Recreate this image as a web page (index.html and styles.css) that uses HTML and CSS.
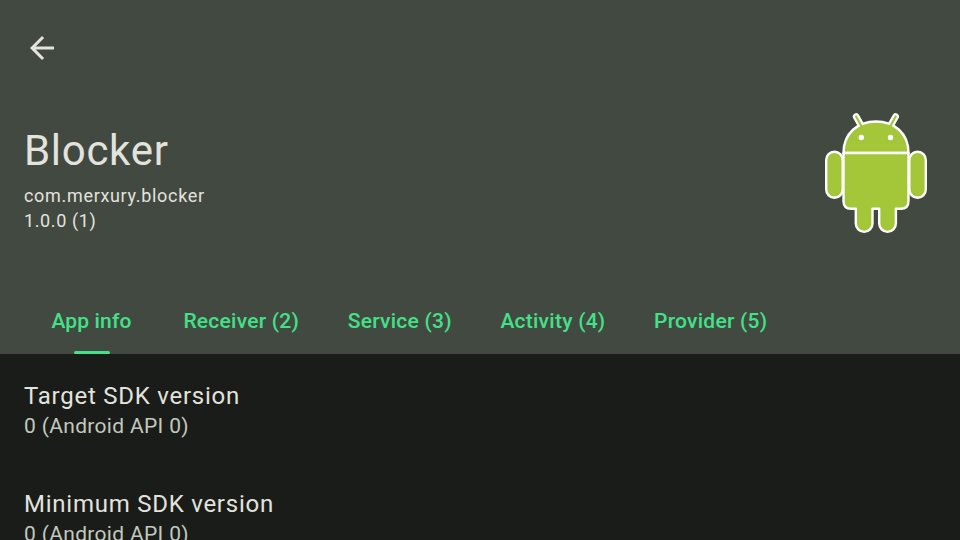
FILE: index.html
```html
<!DOCTYPE html>
<html lang="en">
<head>
<meta charset="utf-8">
<title>Blocker</title>
<link rel="stylesheet" href="styles.css">
</head>
<body>
<div class="screen">
  <header class="header">
    <nav class="toolbar">
      <svg class="back" viewBox="0 0 24 24"><path d="M20 11H7.830l5.590-5.590L12 4l-8 8 8 8 1.410-1.410L7.830 13H20v-2z"/></svg>
    </nav>
    <div class="summary">
      <div class="identity">
        <h1 class="name">Blocker</h1>
        <p class="meta package">com.merxury.blocker</p>
        <p class="meta version">1.0.0 (1)</p>
      </div>
      <svg class="logo" viewBox="0 0 104 122">
        <path d="M32.100 4.500L37.500 14M71.700 4.500L66.300 14" class="antenna-edge"/>
        <g class="outlined">
          <path d="M19.500 41C19.500 21 34 9.500 52 9.500S84.500 21 84.500 41Z"/>
          <path d="M19.500 41H84.500V88.900Q84.500 96.700 76.700 96.700H71.900V111.500A8.350 8.350 0 0 1 55.200 111.500V96.700H48.500V111.500A8.350 8.350 0 0 1 31.800 111.500V96.700H27.200Q19.500 96.700 19.500 88.900Z"/>
          <rect x="2.200" y="39.700" width="16.500" height="46" rx="8.200"/>
          <rect x="85.300" y="39.700" width="16.500" height="46" rx="8.200"/>
        </g>
        <path class="antenna" d="M32.100 4.500L38 15M71.700 4.500L65.800 15"/>
        <circle class="eye" cx="37.300" cy="25.500" r="2.700"/>
        <circle class="eye" cx="66.500" cy="25.500" r="2.700"/>
      </svg>
    </div>
    <nav class="tabs">
      <span class="tab active">App info</span>
      <span class="tab">Receiver (2)</span>
      <span class="tab">Service (3)</span>
      <span class="tab">Activity (4)</span>
      <span class="tab">Provider (5)</span>
    </nav>
  </header>
  <main class="list">
    <section class="item"><h2 class="title">Target SDK version</h2><p class="value">0 (Android API 0)</p></section>
    <section class="item"><h2 class="title">Minimum SDK version</h2><p class="value">0 (Android API 0)</p></section>
  </main>
</div>
</body>
</html>
```
FILE: styles.css
```css
* { box-sizing: border-box; margin: 0; padding: 0; }
body { font-family: Roboto, sans-serif; font-weight: 400; background: #1a1c19; color: #e2e3dd; }
.screen { width: 960px; height: 540px; overflow: hidden; }
.header { height: 354px; background: #424940; display: flex; flex-direction: column; }
.toolbar { height: 96px; padding: 30px 24px; }
.back { display: block; width: 36px; height: 36px; fill: #e2e3dd; }
.summary { height: 192px; padding: 16px 32px 0 24px; display: flex; justify-content: space-between; }
.identity { padding-top: 12px; }
.name { font-size: 42px; line-height: 54px; font-weight: 400; letter-spacing: 0.7px; }
.meta { font-size: 18px; line-height: 24px; letter-spacing: 0.68px; }
.package { margin-top: 6px; }
.version { line-height: 25px; letter-spacing: 0.62px; }
.logo { width: 104px; height: 122px; overflow: visible; }
.outlined { fill: #a4c639; stroke: #fff; stroke-width: 2.400; stroke-linejoin: round; }
.antenna-edge { stroke: #fff; stroke-width: 6.600; stroke-linecap: round; }
.antenna { stroke: #a4c639; stroke-width: 2.200; stroke-linecap: round; }
.eye { fill: #fff; }
.tabs { height: 66px; padding-left: 24px; display: flex; }
.tab { position: relative; min-width: 135px; padding: 0 24.2px; line-height: 66px; font-size: 21px; font-weight: 500; letter-spacing: 0.25px; color: #43e188; text-align: center; white-space: nowrap; }
.tab + .tab { padding-left: 24.4px; }
.active { letter-spacing: 0.15px; }
.active::after { content: ""; position: absolute; left: 50%; bottom: 0; width: 36px; height: 3px; margin-left: -18px; border-radius: 2px; background: #43e188; }
.list { padding: 24px 24px 0; }
.item { height: 108px; }
.title { font-size: 24px; line-height: 36px; font-weight: 400; letter-spacing: 0.75px; }
.value { font-size: 21px; line-height: 25px; letter-spacing: 0.33px; color: #c2c9bd; }
```
